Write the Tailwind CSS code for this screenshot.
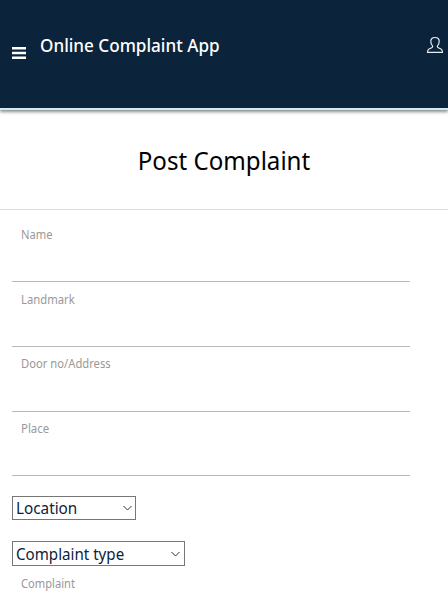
<!DOCTYPE html>
<html lang="en">
<head>
<meta charset="utf-8">
<title>Online Complaint App</title>
<script src="https://cdn.jsdelivr.net/npm/@tailwindcss/browser@4"></script>
</head>
<body class="h-[613px] overflow-hidden bg-white font-['Noto_Sans','Open_Sans',sans-serif]">
<header class="flex h-[110px] items-start border-b-2 border-[#cdecf3] bg-[#0b233b] pl-3 shadow-[0_2px_3px_rgba(0,0,0,0.45)]">
  <svg class="mt-[47px] h-[13px] w-[14px] shrink-0" viewBox="0 0 14 13" fill="#fff"><path d="M0 0h14v2.500H0zM0 4.800h14v2.500H0zM0 9.500h14v2.500H0z"/></svg>
  <h1 class="mt-[33px] ml-[14px] origin-left scale-x-[0.95] whitespace-nowrap text-[18px] leading-6 font-medium text-white">Online Complaint App</h1>
  <svg class="mt-9 mr-1 ml-auto h-[18px] w-[18px] shrink-0" viewBox="0 0 18 18" fill="none" stroke="#e9eef2" stroke-width="1.2" stroke-linejoin="round"><path d="M9 1.500C6.300 1.500 4.800 2.800 4.800 5.200c0 1.900.6 3.400 1.600 4.500.5.8.2 1.600-.7 2L3 13c-1.300.6-1.500 1.600-1.500 3.400h15c0-1.800-.2-2.800-1.500-3.400l-2.700-1.300c-.9-.4-1.200-1.200-.7-2 1-1.100 1.600-2.600 1.600-4.500 0-2.400-1.500-3.700-4.200-3.700z"/></svg>
</header>
<main>
  <div class="flex h-[100px] justify-center border-b border-[#dfdfdf] pt-8">
    <h2 class="h-9 scale-x-[0.927] whitespace-nowrap text-[26px] leading-9 font-normal text-black">Post Complaint</h2>
  </div>
  <form class="ml-3 flex w-[398px] flex-col">
    <label class="flex h-[72px] items-start border-b border-[#b9b9b9] pt-4 pl-[9px] text-[12px] leading-[18px] text-[#999]"><span class="origin-left scale-x-[0.93]">Name</span></label>
    <label class="flex h-[65px] items-start border-b border-[#b9b9b9] pt-[9px] pl-[9px] text-[12px] leading-[18px] text-[#999]"><span class="origin-left scale-x-[0.94]">Landmark</span></label>
    <label class="flex h-[65px] items-start border-b border-[#b9b9b9] pt-2 pl-[9px] text-[12px] leading-[18px] text-[#999]"><span class="origin-left scale-x-[0.935]">Door no/Address</span></label>
    <label class="flex h-16 items-start border-b border-[#b9b9b9] pt-2 pl-[9px] text-[12px] leading-[18px] text-[#999]"><span class="origin-left scale-x-[0.95]">Place</span></label>
    <div class="mt-5 flex h-6 w-[124px] items-center justify-between border border-[#767676] pr-[3px] pl-[3px] text-[16px] leading-[22px] text-[#0b233b]"><span class="origin-left scale-x-[0.955] whitespace-nowrap">Location</span><svg class="h-[6px] w-[9px] shrink-0" viewBox="0 0 9 6" fill="none" stroke="#333"><path d="M.5 1l4 4 4-4"/></svg></div>
    <div class="mt-[21px] flex h-[25px] w-[173px] items-center justify-between border border-[#767676] pr-[4px] pl-[3px] text-[16px] leading-[22px] text-[#0b233b]"><span class="origin-left scale-x-[0.945] whitespace-nowrap">Complaint type</span><svg class="h-[6px] w-[9px] shrink-0" viewBox="0 0 9 6" fill="none" stroke="#333"><path d="M.5 1l4 4 4-4"/></svg></div>
    <label class="mt-[9px] flex pl-[9px] text-[12px] leading-[18px] text-[#999]"><span class="origin-left scale-x-[0.93]">Complaint</span></label>
  </form>
</main>
</body>
</html>
